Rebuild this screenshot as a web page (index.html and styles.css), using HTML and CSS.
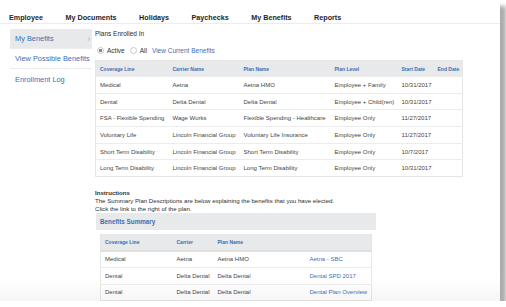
FILE: index.html
```html
<!DOCTYPE html>
<html lang="en">
<head>
    <meta charset="UTF-8">
    <title>My Benefits</title>
    <link rel="stylesheet" href="styles.css">
</head>
<body>
    <div class="panel">
        <!-- Top Navigation -->
        <nav class="top-nav">
            <span>Employee</span>
            <span>My Documents</span>
            <span>Holidays</span>
            <span>Paychecks</span>
            <span>My Benefits</span>
            <span>Reports</span>
        </nav>

        <div class="layout">
            <!-- Sidebar -->
            <ul class="side-menu">
                <li class="active">My Benefits <span class="chevron">&rsaquo;</span></li>
                <li>View Possible Benefits</li>
                <li>Enrollment Log</li>
            </ul>

            <!-- Main Content -->
            <main class="content">
                <p class="section-title">Plans Enrolled In</p>

                <div class="filter-row">
                    <label class="radio checked"><span class="dot"></span>Active</label>
                    <label class="radio"><span class="dot"></span>All</label>
                    <a class="link">View Current Benefits</a>
                </div>

                <table class="grid plans">
                    <colgroup>
                        <col style="width:73px"><col style="width:71px"><col style="width:91px">
                        <col style="width:67px"><col style="width:36px"><col>
                    </colgroup>
                    <thead>
                        <tr>
                            <th>Coverage Line</th>
                            <th>Carrier Name</th>
                            <th>Plan Name</th>
                            <th>Plan Level</th>
                            <th>Start Date</th>
                            <th>End Date</th>
                        </tr>
                    </thead>
                    <tbody>
                        <tr><td>Medical</td><td>Aetna</td><td>Aetna HMO</td><td>Employee + Family</td><td>10/31/2017</td><td></td></tr>
                        <tr><td>Dental</td><td>Delta Dental</td><td>Delta Dental</td><td>Employee + Child(ren)</td><td>10/31/2017</td><td></td></tr>
                        <tr><td>FSA - Flexible Spending</td><td>Wage Works</td><td>Flexible Spending - Healthcare</td><td>Employee Only</td><td>11/27/2017</td><td></td></tr>
                        <tr><td>Voluntary Life</td><td>Lincoln Financial Group</td><td>Voluntary Life Insurance</td><td>Employee Only</td><td>11/27/2017</td><td></td></tr>
                        <tr><td>Short Term Disability</td><td>Lincoln Financial Group</td><td>Short Term Disability</td><td>Employee Only</td><td>10/7/2017</td><td></td></tr>
                        <tr><td>Long Term Disability</td><td>Lincoln Financial Group</td><td>Long Term Disability</td><td>Employee Only</td><td>10/31/2017</td><td></td></tr>
                    </tbody>
                </table>

                <!-- Instructions -->
                <div class="instructions">
                    <p class="instr-title">Instructions</p>
                    <p>The Summary Plan Descriptions are below explaining the benefits that you have elected.</p>
                    <p>Click the link to the right of the plan.</p>
                </div>

                <div class="summary-bar">Benefits Summary</div>

                <div class="summary-body">
                    <table class="grid summary">
                        <colgroup>
                            <col style="width:72px"><col style="width:41px"><col style="width:92px"><col>
                        </colgroup>
                        <thead>
                            <tr><th>Coverage Line</th><th>Carrier</th><th>Plan Name</th><th></th></tr>
                        </thead>
                        <tbody>
                            <tr><td>Medical</td><td>Aetna</td><td>Aetna HMO</td><td><a class="link">Aetna - SBC</a></td></tr>
                            <tr><td>Dental</td><td>Delta Dental</td><td>Delta Dental</td><td><a class="link">Dental SPD 2017</a></td></tr>
                            <tr><td>Dental</td><td>Delta Dental</td><td>Delta Dental</td><td><a class="link">Dental Plan Overview</a></td></tr>
                        </tbody>
                    </table>
                </div>
            </main>
        </div>
    </div>
</body>
</html>
```

FILE: styles.css
```css
/* Reset */
* {
    margin: 0;
    padding: 0;
    box-sizing: border-box;
}

body {
    font-family: "Liberation Sans", Arial, sans-serif;
    background-color: #fff;
    color: #444;
}

/* Page panel with drop shadow */
.panel {
    position: relative;
    width: 500px;
    height: 301px;
    overflow: hidden;
    background-color: #fff;
    box-shadow: 6px 6px 4px rgba(0, 0, 0, 0.33);
}

.panel::after {
    content: "";
    position: absolute;
    left: 0;
    right: 0;
    bottom: 0;
    height: 24px;
    background: linear-gradient(rgba(0, 0, 0, 0), rgba(0, 0, 0, 0.035));
}

/* Top Navigation */
.top-nav {
    display: flex;
    gap: 22.5px;
    height: 24px;
    padding: 13px 0 0 9px;
    border-bottom: 1px solid #ececec;
    font-size: 7.2px;
    font-weight: bold;
    color: #1e1e1e;
}

.layout {
    display: flex;
    padding-top: 5px;
}

/* Sidebar */
.side-menu {
    list-style: none;
    flex: 0 0 82px;
    margin: 0 3px 0 10px;
    font-size: 7.4px;
    color: #3b6fb4;
}

.side-menu li {
    display: flex;
    justify-content: space-between;
    align-items: center;
    height: 20px;
    padding: 0 2px 0 5px;
    white-space: nowrap;
    border-bottom: 1px solid #ececec;
}

.side-menu li:last-child {
    border-bottom: none;
}

.side-menu li.active {
    background-color: #e8e9eb;
}

.chevron {
    color: #b5b5b5;
    font-size: 9px;
}

/* Main content */
.content {
    flex: 1;
}

.section-title {
    font-size: 6.5px;
    color: #2a2a2a;
    margin-top: 1px;
    height: 14px;
}

.filter-row {
    display: flex;
    align-items: center;
    height: 13px;
    margin-bottom: 3px;
    font-size: 6.5px;
    color: #333;
}

.radio {
    display: flex;
    align-items: center;
    margin-right: 3px;
}

.radio .dot {
    width: 7px;
    height: 7px;
    border: 1px solid #c8c8c8;
    border-radius: 50%;
    margin: 0 3px 0 2px;
    background: #fff;
}

.radio.checked .dot {
    background: radial-gradient(circle, #8a8a8a 0 1.6px, #fff 2px);
}

.link {
    color: #3d70b4;
    margin-left: 2px;
}

/* Tables */
.grid {
    border-collapse: collapse;
    table-layout: fixed;
    font-size: 6px;
}

.grid th {
    height: 16px;
    padding-left: 4px;
    text-align: left;
    font-size: 5px;
    font-weight: bold;
    color: #3b6fb4;
    background-color: #e8e9eb;
}

.grid td {
    height: 16.7px;
    padding-left: 4px;
    white-space: nowrap;
    overflow: hidden;
    border-top: 1px solid #ececec;
    color: #444;
}

.plans {
    width: 368px;
    border: 1px solid #e6e6e6;
}

/* Instructions */
.instructions {
    margin-top: 12px;
    font-size: 6.1px;
    line-height: 8px;
    color: #2e2e2e;
}

.instr-title {
    font-weight: bold;
}

.summary-bar {
    width: 280px;
    height: 17px;
    margin: 0 0 0 1px;
    padding: 5px 0 0 4px;
    background-color: #e8e9eb;
    font-size: 6.3px;
    font-weight: bold;
    color: #3b6fb4;
}

.summary-body {
    padding: 4px 0 0 5px;
}

.summary {
    width: 272px;
    border: 1px solid #e6e6e6;
}

.summary th {
    border-bottom: 2px solid #e0e0e0;
}

.summary td a.link {
    margin-left: 0;
}
```
